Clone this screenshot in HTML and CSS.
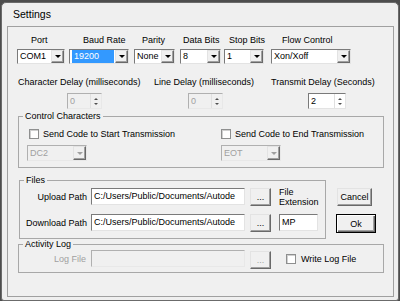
FILE: index.html
```html
<!DOCTYPE html>
<html lang="en">
<head>
  <meta charset="UTF-8">
  <title>Settings</title>
  <link rel="stylesheet" href="styles.css">
</head>
<body>

<div class="window">
  <div class="titlebar">Settings</div>

  <div class="client">

    <!-- serial port settings -->
    <div class="port-row">
      <div class="field f-port">
        <span class="cap">Port</span>
        <div class="combo"><span class="val">COM1</span><span class="drop"></span></div>
      </div>
      <div class="field f-baud">
        <span class="cap">Baud Rate</span>
        <div class="combo"><span class="val"><span class="sel">19200</span></span><span class="drop"></span></div>
      </div>
      <div class="field f-parity">
        <span class="cap">Parity</span>
        <div class="combo"><span class="val">None</span><span class="drop"></span></div>
      </div>
      <div class="field f-data">
        <span class="cap">Data Bits</span>
        <div class="combo"><span class="val">8</span><span class="drop"></span></div>
      </div>
      <div class="field f-stop">
        <span class="cap">Stop Bits</span>
        <div class="combo"><span class="val">1</span><span class="drop"></span></div>
      </div>
      <div class="field f-flow">
        <span class="cap">Flow Control</span>
        <div class="combo"><span class="val">Xon/Xoff</span><span class="drop"></span></div>
      </div>
    </div>

    <!-- delays -->
    <div class="delay-row">
      <div class="dfield d-char">
        <span class="cap">Character Delay (milliseconds)</span>
        <div class="spin disabled"><span class="val">0</span><span class="arr"><i class="up"></i><i class="down"></i></span></div>
      </div>
      <div class="dfield d-line">
        <span class="cap">Line Delay (milliseconds)</span>
        <div class="spin disabled"><span class="val">0</span><span class="arr"><i class="up"></i><i class="down"></i></span></div>
      </div>
      <div class="dfield d-tx">
        <span class="cap">Transmit Delay (Seconds)</span>
        <div class="spin"><span class="val">2</span><span class="arr"><i class="up"></i><i class="down"></i></span></div>
      </div>
    </div>

    <fieldset class="group ctrl">
      <legend>Control Characters</legend>
      <div class="ctrl-grid">
        <label class="chk-line left"><span class="box"></span>Send Code to Start Transmission</label>
        <label class="chk-line right"><span class="box"></span>Send Code to End Transmission</label>
        <div class="combo code disabled left"><span class="val">DC2</span><span class="drop"></span></div>
        <div class="combo code disabled right"><span class="val">EOT</span><span class="drop"></span></div>
      </div>
    </fieldset>

    <div class="files-row">
      <fieldset class="group files">
        <legend>Files</legend>
        <div class="path-row">
          <span class="lbl">Upload Path</span>
          <div class="text path">C:/Users/Public/Documents/Autode</div>
          <button class="btn dots">...</button>
          <span class="ext-cap">File<br>Extension</span>
        </div>
        <div class="path-row">
          <span class="lbl">Download Path</span>
          <div class="text path">C:/Users/Public/Documents/Autode</div>
          <button class="btn dots">...</button>
          <div class="text ext">MP</div>
        </div>
      </fieldset>

      <div class="actions">
        <button class="btn cancel">Cancel</button>
        <button class="btn ok">Ok</button>
      </div>
    </div>

    <fieldset class="group log">
      <legend>Activity Log</legend>
      <div class="path-row log-row">
        <span class="lbl gray">Log File</span>
        <div class="text path disabled"></div>
        <button class="btn dots disabled">...</button>
        <label class="chk-line"><span class="box"></span>Write Log File</label>
      </div>
    </fieldset>

  </div>
</div>

</body>
</html>
```

FILE: styles.css
```css
* {
  box-sizing: border-box;
}
body {
  margin: 0;
  background: #4d4d4d;
  font-family: "Liberation Sans", Arial, sans-serif;
  font-size: 9px;
  color: #000;
}
.window {
  margin: 2px 1px 0;
  height: 299px;
  background: #efefef;
  border: 1px solid #6b6b6b;
  border-radius: 5px 5px 3px 3px;
  padding: 0 4px 3px 5px;
}
.titlebar {
  height: 23px;
  line-height: 23px;
  padding-left: 6px;
  font-size: 10.5px;
}
.client {
  height: 271px;
  border: 1px solid #a0a0a0;
  background: #f0f0f0;
  padding: 8px 0 0 10px;
}

/* captions */
.cap {
  display: block;
  height: 11px;
  line-height: 11px;
  white-space: nowrap;
}

/* first row */
.port-row {
  display: flex;
  margin-left: -1px;
}
.field .cap {
  margin-bottom: 3px;
}
.f-port { width: 48px; }
.f-port .cap { margin-left: 14px; }
.f-baud { width: 60px; margin-left: 4px; }
.f-baud .cap { margin-left: 14px; }
.f-parity { width: 41px; margin-left: 5px; }
.f-parity .cap { margin-left: 8px; }
.f-data { width: 41px; margin-left: 5px; }
.f-data .cap { margin-left: 3px; }
.f-stop { width: 40px; margin-left: 3px; }
.f-stop .cap { margin-left: 5px; }
.f-flow { width: 80px; margin-left: 7px; }
.f-flow .cap { margin-left: 11px; }

/* combo boxes */
.combo {
  display: flex;
  height: 15px;
  background: #fff;
  border: 1px solid;
  border-color: #7a7a7a #e3e3e3 #e3e3e3 #7a7a7a;
}
.combo .val {
  flex: 1;
  line-height: 13px;
  padding-left: 2px;
  white-space: nowrap;
  overflow: hidden;
}
.combo .sel {
  display: block;
  height: 13px;
  margin-right: 1px;
  padding-left: 2px;
  background: #3399ff;
  color: #fff;
}
.combo .drop {
  width: 13px;
  height: 13px;
  display: flex;
  align-items: center;
  justify-content: center;
  background: #f0f0f0;
  border: 1px solid;
  border-color: #e3e3e3 #696969 #696969 #e3e3e3;
  box-shadow: inset -1px -1px 0 #a0a0a0;
}
.combo .drop::after {
  content: "";
  border-left: 3px solid transparent;
  border-right: 3px solid transparent;
  border-top: 3px solid #000;
}
.combo.disabled {
  background: #f0f0f0;
  border-color: #b0b0b0 #e8e8e8 #e8e8e8 #b0b0b0;
  color: #a0a0a0;
}
.combo.disabled .drop::after {
  border-top-color: #a0a0a0;
}
.combo.code {
  width: 60px;
  height: 16px;
}
.combo.code .val {
  line-height: 14px;
}
.combo.code .drop {
  height: 14px;
}

/* delays */
.delay-row {
  display: flex;
  margin-top: 13px;
}
.dfield .spin {
  margin-top: 5px;
}
.d-char { width: 136px; }
.d-char .spin { margin-left: 49px; width: 35px; }
.d-line { width: 117px; }
.d-line .spin { margin-left: 34px; width: 35px; }
.d-tx .spin { margin-left: 37px; width: 38px; }

.spin {
  display: flex;
  height: 16px;
  background: #fff;
  border: 1px solid;
  border-color: #7a7a7a #e3e3e3 #e3e3e3 #7a7a7a;
}
.spin .val {
  flex: 1;
  line-height: 14px;
  padding-left: 2px;
}
.spin .arr {
  width: 11px;
  display: flex;
  flex-direction: column;
  align-items: center;
  justify-content: space-around;
  padding: 2px 0;
  border-left: 1px solid #e0e0e0;
}
.spin .up {
  border-left: 2px solid transparent;
  border-right: 2px solid transparent;
  border-bottom: 2px solid #505050;
}
.spin .down {
  border-left: 2px solid transparent;
  border-right: 2px solid transparent;
  border-top: 2px solid #505050;
}
.spin.disabled {
  background: #f0f0f0;
  border-color: #b0b0b0 #e8e8e8 #e8e8e8 #b0b0b0;
  color: #a0a0a0;
}

/* group boxes */
.group {
  margin: 0;
  padding: 0;
  border: 1px solid #a8a8a8;
}
.group legend {
  margin-left: 4px;
  padding: 0 2px;
  line-height: 11px;
}
.ctrl {
  width: 366px;
  margin-top: 2px;
  padding: 6px 0 6px 0;
}
.ctrl-grid {
  display: grid;
  grid-template-columns: 193px 1fr;
  row-gap: 6px;
  padding-left: 8px;
}
.chk-line {
  display: flex;
  align-items: center;
  gap: 4px;
  height: 11px;
  white-space: nowrap;
}
.chk-line.left .box { margin-left: 2px; }
.chk-line.right .box { margin-left: 1px; }
.combo.right { margin-left: 1px; }
.box {
  width: 10px;
  height: 10px;
  background: #fff;
  border: 1px solid #8e8f8f;
  box-shadow: inset 1px 1px 0 #d0d0d0;
}

/* files */
.files-row {
  display: flex;
  margin-top: 7px;
  margin-left: 1px;
}
.files {
  width: 307px;
  padding: 2px 6px 6px 0;
}
.path-row {
  display: flex;
  align-items: center;
  height: 18px;
}
.path-row + .path-row {
  margin-top: 8px;
}
.lbl {
  width: 67px;
  margin-right: 4px;
  text-align: right;
  white-space: nowrap;
}
.gray {
  color: #a0a0a0;
}
.text {
  height: 17px;
  line-height: 15px;
  padding-left: 2px;
  background: #fff;
  border: 1px solid;
  border-color: #7a7a7a #e3e3e3 #e3e3e3 #7a7a7a;
  white-space: nowrap;
  overflow: hidden;
}
.text.disabled {
  background: #f0f0f0;
  border-color: #b0b0b0 #e8e8e8 #e8e8e8 #b0b0b0;
}
.path {
  width: 154px;
  align-self: flex-start;
  margin-right: 5px;
}
.ext {
  width: 39px;
  align-self: flex-start;
}
.ext-cap {
  line-height: 10px;
  margin-top: -1px;
}

/* buttons */
.btn {
  font-family: inherit;
  font-size: 9px;
  color: #000;
  padding: 0;
  background: #f0f0f0;
  border: 1px solid;
  border-color: #e3e3e3 #696969 #696969 #e3e3e3;
  box-shadow: inset -1px -1px 0 #a0a0a0;
}
.dots {
  width: 21px;
  height: 18px;
  margin-right: 8px;
  line-height: 14px;
}
.dots.disabled {
  color: #a0a0a0;
}
.actions {
  display: flex;
  flex-direction: column;
  align-items: flex-start;
  padding-top: 13px;
  margin-left: 11px;
}
.cancel {
  width: 35px;
  height: 18px;
}
.ok {
  width: 40px;
  height: 19px;
  margin-top: 8px;
  margin-left: -1px;
  border-color: #000;
  box-shadow: inset 1px 1px 0 #fff, inset -1px -1px 0 #696969, inset -2px -2px 0 #a0a0a0;
}

/* activity log */
.log {
  width: 366px;
  padding: 0 0 4px 0;
}
.log-row .lbl {
  margin-right: 5px;
}
.log-row .dots {
  margin-top: 1px;
  align-self: flex-start;
  margin-right: 15px;
}
.log-row .chk-line {
  gap: 5px;
}
```
